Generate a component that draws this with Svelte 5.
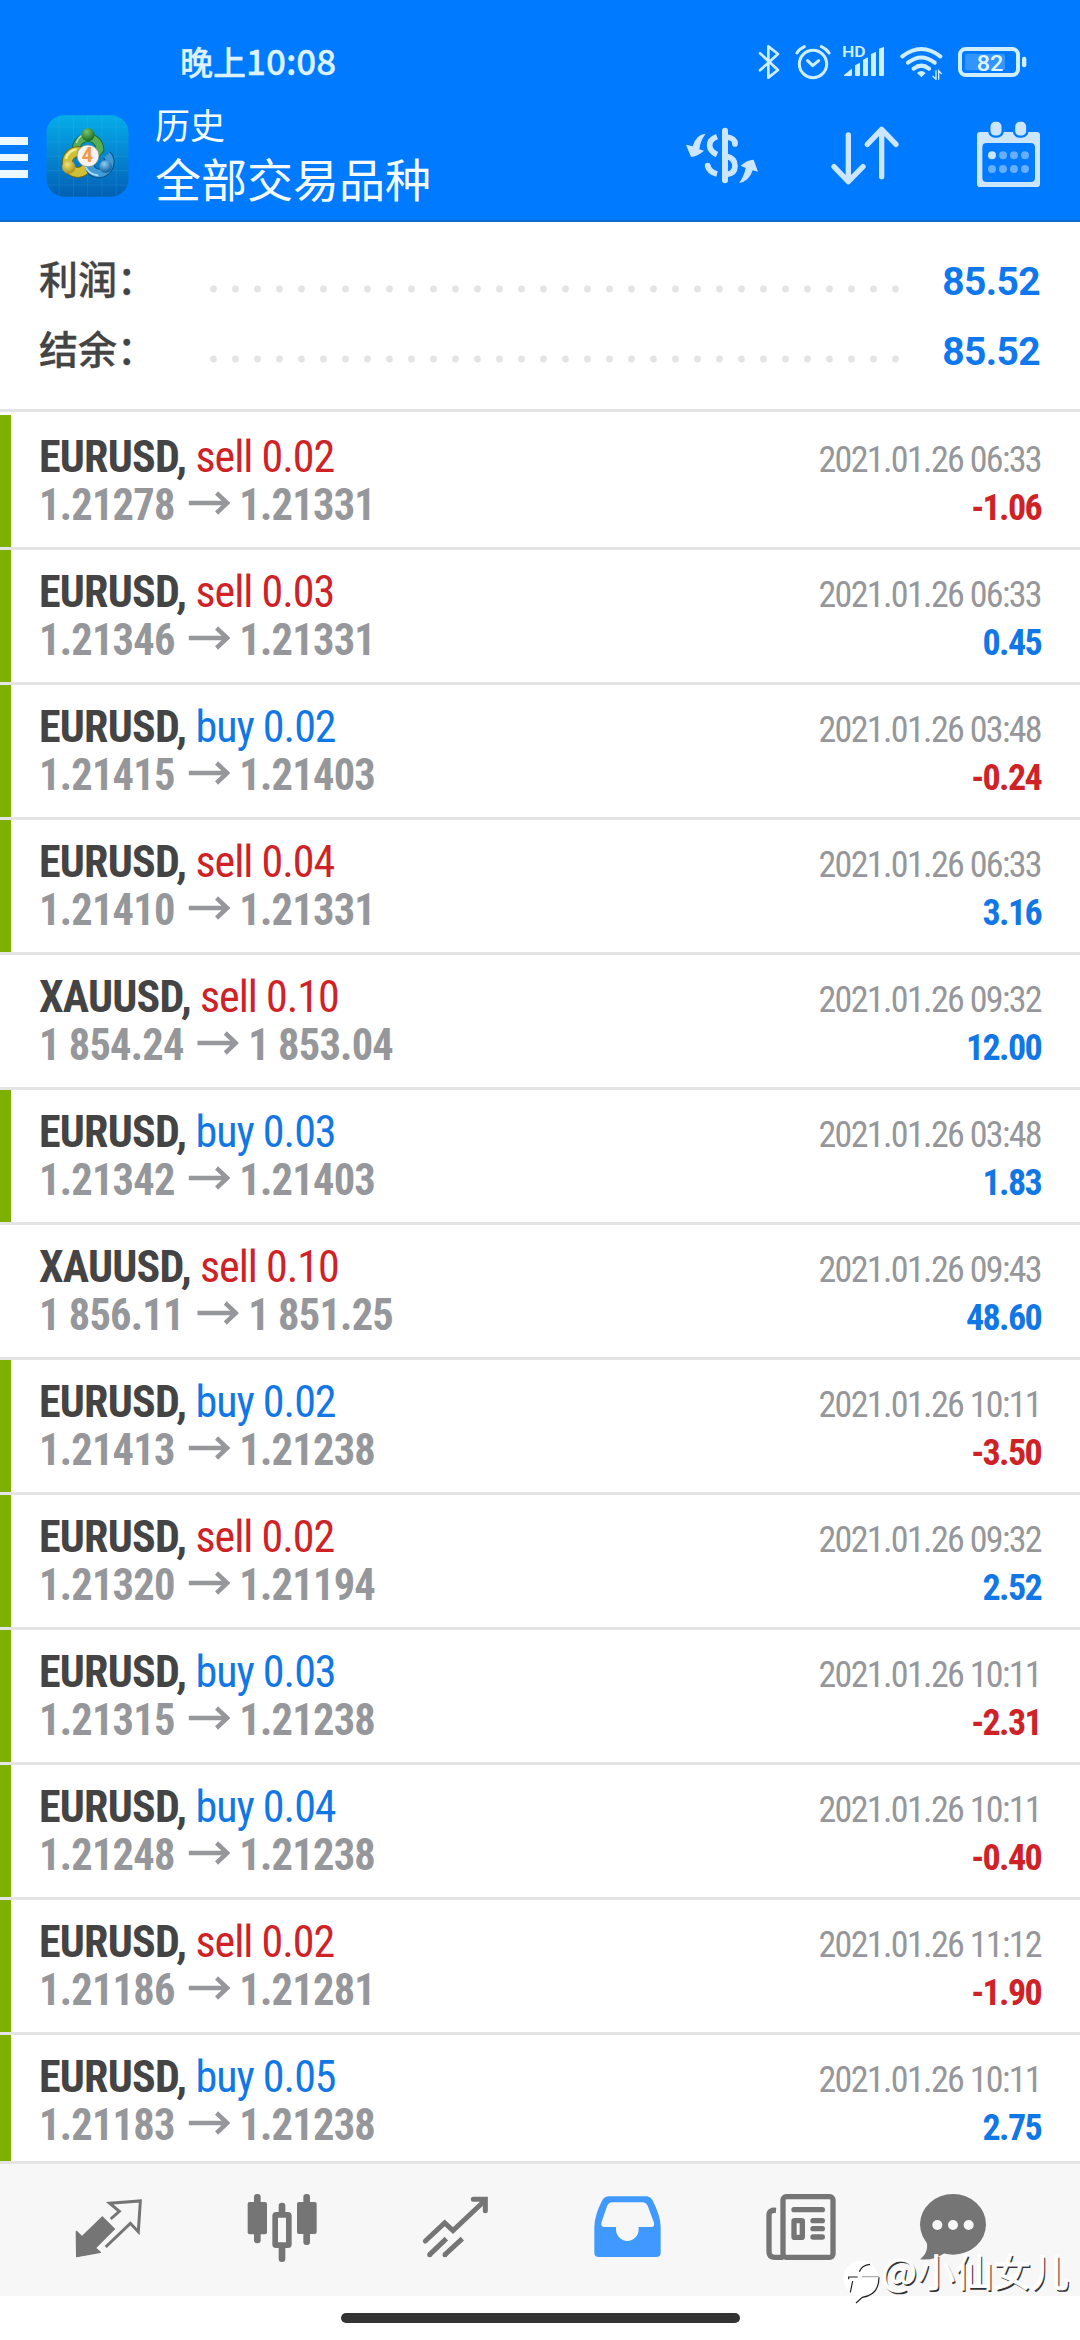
<script>
  const summary = [
    { label: '利润：', value: '85.52' },
    { label: '结余：', value: '85.52' },
  ];

  const deals = [
    { symbol: 'EURUSD', side: 'sell', volume: '0.02', open: '1.21278', close: '1.21331', time: '2021.01.26 06:33', profit: '-1.06', mark: true },
    { symbol: 'EURUSD', side: 'sell', volume: '0.03', open: '1.21346', close: '1.21331', time: '2021.01.26 06:33', profit: '0.45', mark: true },
    { symbol: 'EURUSD', side: 'buy', volume: '0.02', open: '1.21415', close: '1.21403', time: '2021.01.26 03:48', profit: '-0.24', mark: true },
    { symbol: 'EURUSD', side: 'sell', volume: '0.04', open: '1.21410', close: '1.21331', time: '2021.01.26 06:33', profit: '3.16', mark: true },
    { symbol: 'XAUUSD', side: 'sell', volume: '0.10', open: '1 854.24', close: '1 853.04', time: '2021.01.26 09:32', profit: '12.00', mark: false },
    { symbol: 'EURUSD', side: 'buy', volume: '0.03', open: '1.21342', close: '1.21403', time: '2021.01.26 03:48', profit: '1.83', mark: true },
    { symbol: 'XAUUSD', side: 'sell', volume: '0.10', open: '1 856.11', close: '1 851.25', time: '2021.01.26 09:43', profit: '48.60', mark: false },
    { symbol: 'EURUSD', side: 'buy', volume: '0.02', open: '1.21413', close: '1.21238', time: '2021.01.26 10:11', profit: '-3.50', mark: true },
    { symbol: 'EURUSD', side: 'sell', volume: '0.02', open: '1.21320', close: '1.21194', time: '2021.01.26 09:32', profit: '2.52', mark: true },
    { symbol: 'EURUSD', side: 'buy', volume: '0.03', open: '1.21315', close: '1.21238', time: '2021.01.26 10:11', profit: '-2.31', mark: true },
    { symbol: 'EURUSD', side: 'buy', volume: '0.04', open: '1.21248', close: '1.21238', time: '2021.01.26 10:11', profit: '-0.40', mark: true },
    { symbol: 'EURUSD', side: 'sell', volume: '0.02', open: '1.21186', close: '1.21281', time: '2021.01.26 11:12', profit: '-1.90', mark: true },
    { symbol: 'EURUSD', side: 'buy', volume: '0.05', open: '1.21183', close: '1.21238', time: '2021.01.26 10:11', profit: '2.75', mark: true },
  ];

  const dots = Array.from({ length: 32 }, (_, i) => 3.5 + i * 22);
</script>

<div class="screen">
  <header>
    <div class="status">
      <div class="clock">晚上<span>10:08</span></div>
      <div class="status-icons">
        <svg class="bluetooth" viewBox="353 72 66 108">
          <path d="M359 100 413 150 384 173V79L413 102 359 151" fill="none" stroke="#cfeeff" stroke-width="8" stroke-linecap="round" stroke-linejoin="round" />
        </svg>
        <svg class="alarm" viewBox="465 72 108 108" fill="none" stroke="#cfeeff" stroke-width="9" stroke-linecap="round" stroke-linejoin="round">
          <circle cx="519" cy="132" r="41" />
          <path d="M503 122 518 137 536 122M471 99Q478 87 493 80M544 80Q560 87 567 99" />
        </svg>
        <svg class="signal" viewBox="606 72 129 108" fill="#cfeeff">
          <text x="606" y="110" font-size="44" font-weight="600" textLength="71" lengthAdjust="spacingAndGlyphs">HD</text>
          <path d="M612 165 634 147Q636 145 636 148V164Q636 168 632 168H614Q611 168 612 165ZM645 136 660 128V165Q660 168 657 168H648Q645 168 645 165ZM669 119 684 112V165Q684 168 681 168H672Q669 168 669 165ZM693 102 708 95V165Q708 168 705 168H696Q693 168 693 165ZM717 86 732 80V165Q732 168 729 168H720Q717 168 717 165Z" />
        </svg>
        <svg class="wifi" viewBox="777 72 132 108" fill="none" stroke="#cfeeff" stroke-width="12" stroke-linecap="round">
          <path d="M787 109Q844 65 901 109M804 128Q844 97 884 128M821 146Q844 128 867 146" />
          <path d="M831 159Q844 147 857 159L844 172Z" fill="#cfeeff" stroke="none" />
          <path d="M888 152V178L879 169M896 178V152L904 161" stroke-width="4" />
        </svg>
        <svg class="battery" viewBox="951 72 210 108">
          <rect x="960" y="87" width="174" height="78" rx="17" fill="none" stroke="#cfeeff" stroke-width="12" />
          <rect x="975" y="102" width="120" height="49" rx="6" fill="#3395ff" />
          <rect x="1146" y="110" width="13" height="32" rx="6" fill="#cfeeff" />
          <text x="1010" y="152" font-size="66" font-weight="500" textLength="80" lengthAdjust="spacingAndGlyphs" fill="#e2f6ff">82</text>
        </svg>
      </div>
    </div>

    <div class="toolbar">
      <div class="menu"><i></i><i></i><i></i></div>
      <svg class="logo" viewBox="139 74 249 247">
        <defs>
          <linearGradient id="tile" x1="0" y1="0" x2="0" y2="1">
            <stop offset="0" stop-color="#05ade8" />
            <stop offset=".5" stop-color="#0585d0" />
            <stop offset="1" stop-color="#0260b4" />
          </linearGradient>
          <radialGradient id="green" cx=".4" cy=".3" r=".7">
            <stop offset="0" stop-color="#7cc56c" />
            <stop offset="1" stop-color="#156a22" />
          </radialGradient>
          <radialGradient id="yellow" cx=".4" cy=".3" r=".7">
            <stop offset="0" stop-color="#f0e278" />
            <stop offset="1" stop-color="#a8901a" />
          </radialGradient>
          <radialGradient id="blue" cx=".4" cy=".3" r=".7">
            <stop offset="0" stop-color="#8fd0f5" />
            <stop offset="1" stop-color="#0d5d9f" />
          </radialGradient>
        </defs>
        <rect x="140" y="75" width="247" height="245" rx="52" fill="url(#tile)" />
        <path d="M178 80V316M221 76V320M264 76V320M307 76V320M350 80V316M142 110H385M140 155H387M140 198H387M140 241H387M142 285H385" stroke="#6fd0ff" stroke-opacity=".2" stroke-width="2" />
        <g fill="none">
          <path d="M229 178A36 36 0 1 1 301 178L284 200" stroke="#1b6a30" stroke-width="26" />
          <path d="M229 178A36 36 0 1 1 301 178L284 200" stroke="#55ae55" stroke-width="20" />
          <circle cx="234" cy="216" r="31" stroke="#6f6a14" stroke-width="33" />
          <circle cx="234" cy="216" r="31" stroke="#cfc038" stroke-width="27" />
          <path d="M269 224Q274 250 300 250A34 34 0 0 0 322 194" stroke="#0b4f86" stroke-width="29" />
          <path d="M269 224Q274 250 300 250A34 34 0 0 0 322 194" stroke="#3f9ad6" stroke-width="23" />
          <path d="M256 226Q264 252 296 256" stroke="#a7dcfa" stroke-width="6" />
          <path d="M198 206Q206 182 230 177" stroke="#f5ef98" stroke-width="7" />
          <path d="M230 158Q236 139 250 134" stroke="#b8e3ae" stroke-width="5" />
        </g>
        <circle cx="265" cy="133" r="20" fill="url(#green)" />
        <circle cx="207" cy="231" r="20" fill="url(#yellow)" />
        <circle cx="318" cy="229" r="19" fill="url(#blue)" />
        <circle cx="265" cy="197" r="33" fill="#f6f3f2" stroke="#6a7f70" stroke-width="2" />
        <text x="263" y="217" font-size="59" font-weight="700" text-anchor="middle" fill="#f39843">4</text>
      </svg>
      <div class="titles">
        <div class="section">历史</div>
        <div class="filter">全部交易品种</div>
      </div>
      <div class="actions">
        <svg class="currency" viewBox="135 315 222 174">
          <g fill="none" stroke="#cce6ff" stroke-width="17">
            <path d="M255 329V478" stroke-linecap="round" stroke-width="18" />
            <path d="M260 348Q283 350 286 368" />
            <path d="M285 367V369" stroke-linecap="round" />
            <path d="M260 406Q285 412 285 435T260 460M231 347Q209 355 209 373T231 401M203 434Q207 453 231 459" />
            <path d="M203 434V435" stroke-linecap="round" />
          </g>
          <path d="M197 338Q168 340 158 376L138 371 153 408Q172 407 192 389L178 385Q181 358 197 338ZM297 486Q328 481 338 448L354 452 341 416Q321 416 302 434L317 441Q312 467 297 486Z" fill="#cce6ff" />
        </svg>
        <svg class="sort" viewBox="570 315 210 180">
          <path d="M625 345V484M582 440 625 485 669 440M725 470V329M682 373 725 328 768 373" fill="none" stroke="#cce6ff" stroke-width="16" stroke-linecap="round" stroke-linejoin="round" />
        </svg>
        <svg class="calendar" viewBox="1008 303 195 201" fill="#cce6ff">
          <path fill-rule="evenodd" d="M1021 336H1190Q1200 336 1200 346V491Q1200 501 1190 501H1021Q1011 501 1011 491V346Q1011 336 1021 336ZM1040 369Q1027 369 1027 382V473Q1027 486 1040 486H1172Q1185 486 1185 473V382Q1185 369 1172 369Z" />
          <rect x="1048" y="302" width="40" height="48" rx="17" stroke="#007aff" stroke-width="7" />
          <rect x="1122" y="302" width="40" height="48" rx="17" stroke="#007aff" stroke-width="7" />
          {#each [406, 447] as y}
            {#each [1056, 1089, 1122, 1155] as x}
              <circle cx={x} cy={y} r="12" fill={x === 1056 && y === 406 ? '#cce6ff' : '#66afff'} />
            {/each}
          {/each}
        </svg>
      </div>
    </div>
  </header>

  <section class="summary">
    {#each summary as line}
      <div class="total">
        <span class="label">{line.label}</span>
        <svg class="leader" viewBox="0 0 690 8">
          {#each dots as x}
            <circle cx={x} cy="4" r="3.4" />
          {/each}
        </svg>
        <span class="sum">{line.value}</span>
      </div>
    {/each}
  </section>

  <main>
    {#each deals as deal}
      <article class:mark={deal.mark}>
        <div class="left">
          <div class="name"><b>{deal.symbol},</b> <span class={deal.side}>{deal.side} {deal.volume}</span></div>
          <div class="prices">
            <span>{deal.open}</span>
            <svg viewBox="0 0 43 24"><path d="M0 12H40M29 2 40 12 29 22" /></svg>
            <span>{deal.close}</span>
          </div>
        </div>
        <div class="right">
          <div class="time">{deal.time}</div>
          <div class="profit" class:loss={deal.profit.startsWith('-')}>{deal.profit}</div>
        </div>
      </article>
    {/each}
  </main>

  <nav>
    <svg viewBox="222 519 207 210" width="69">
      <path d="M307 591 343 627 286 684 301 697 230 710 229 634 246 650Z" fill="#757575" stroke="#757575" stroke-width="4" stroke-linejoin="round" />
      <path d="M332 597 358 574 329 550 421 543 415 635 391 610 317 681" fill="none" stroke="#757575" stroke-width="9" />
    </svg>
    <svg viewBox="735 519 216 210" width="72" fill="#757575">
      <rect x="740" y="546" width="58" height="97" rx="6" />
      <rect x="759" y="522" width="20" height="148" rx="9" />
      <rect x="888" y="546" width="59" height="96" rx="6" />
      <rect x="907" y="522" width="20" height="153" rx="9" />
      <rect x="833" y="548" width="20" height="40" rx="9" />
      <rect x="833" y="674" width="20" height="52" rx="9" />
      <rect x="822.5" y="584.5" width="41" height="91" rx="3" fill="#f7f7f7" stroke="#757575" stroke-width="17" stroke-linejoin="round" />
    </svg>
    <svg viewBox="60 159 204 210" width="68" fill="none" stroke="#757575" stroke-width="15">
      <path d="M73 303 131 249 156 272 250 183M217 178H253V212" stroke-linecap="round" />
      <path d="M86 344 136 296M132 344 184 296" />
      <path d="M86 344V344.1M132 344V344.1" stroke-linecap="round" />
    </svg>
    <svg viewBox="579 159 207 210" width="69">
      <path fill="#4099ff" fill-rule="evenodd" d="M625 169H742Q752 171 757 180 781 225 782 260V338Q782 351 768 351H597Q583 351 583 338V260Q584 225 606 182 613 170 625 169ZM635 187Q626 188 621 199L604 248Q602 261 614 261H648V268A34 35 0 0 0 716 268V261H753Q765 261 762 248L743 197Q739 188 729 187Z" />
    </svg>
    <svg viewBox="105 159 216 210" width="72" fill="none" stroke="#757575" stroke-width="16">
      <rect x="159" y="170" width="150" height="182" rx="10" />
      <path d="M138 211Q117 209 117 225V335Q117 352 135 352H160" />
      <path d="M192 209H277M249 242H277M249 266H277M249 291H277" stroke-linecap="round" />
      <rect x="192" y="242" width="25" height="50" rx="2" />
    </svg>
    <svg viewBox="567 159 204 210" width="68">
      <ellipse cx="669" cy="253" rx="99" ry="91" fill="#757575" />
      <path d="M588 298Q600 335 570 358 612 363 650 335Z" fill="#757575" />
      <g fill="#f7f7f7">
        <circle cx="622" cy="255" r="15" />
        <circle cx="669" cy="255" r="15" />
        <circle cx="716" cy="255" r="15" />
      </g>
    </svg>
  </nav>
  <div class="gesture"><i></i></div>

  <div class="watermark">
    <svg viewBox="338 360 114 132">
      <circle cx="392" cy="414" r="53" fill="#fff" />
      <path d="M387 395Q395 375 419 373M355 418V411H382M360 457 367 423M446 412Q446 465 396 472L377 489" fill="none" stroke="#222" stroke-width="3.5" />
      <path d="M395 410H446" stroke="#aaa" stroke-width="3.5" />
    </svg>
    <span>@小仙女儿</span>
  </div>
</div>

<style>
:global(body) {
  background: #fff;
}

.screen {
  position: relative;
  display: flex;
  flex-direction: column;
  width: 1080px;
  height: 2340px;
  overflow: hidden;
  background: #fff;
  font-family: Roboto, "Noto Sans CJK SC", sans-serif;
}

svg {
  display: block;
  flex: none;
}

header {
  box-sizing: border-box;
  height: 222px;
  background: #007aff;
  border-bottom: 2px solid #0f6bd0;
}

.status {
  display: flex;
  justify-content: space-between;
  align-items: center;
  box-sizing: border-box;
  height: 96px;
  padding: 28px 53px 0 180px;
}

.clock {
  display: flex;
  align-items: baseline;
  padding-bottom: 4px;
  color: #dcf3ff;
  font: 500 33px/40px "Noto Sans CJK SC", sans-serif;
  -webkit-text-stroke: 0.3px #dcf3ff;
}

.clock span {
  font-size: 35px;
}

.status-icons {
  display: flex;
}

.status-icons svg {
  height: 36px;
}

.bluetooth { width: 22px; margin-right: 15px; }
.alarm { width: 36px; margin-right: 11px; }
.signal { width: 43px; margin-right: 14px; }
.wifi { width: 44px; margin-right: 14px; }
.battery { width: 70px; }

.toolbar {
  display: flex;
  align-items: center;
  height: 117px;
}

.menu {
  display: flex;
  flex-direction: column;
  gap: 9px;
  width: 28px;
  padding-top: 6px;
}

.menu i {
  height: 7.5px;
  background: #ecf8ff;
}

.logo {
  width: 83px;
  height: 82px;
  margin: 3px 26px 0 18px;
}

.titles {
  flex: 1;
  padding-bottom: 6px;
  color: #f4fbff;
  font-family: "Noto Sans CJK SC", sans-serif;
}

.section {
  font-size: 35px;
  line-height: 46px;
}

.filter {
  font-size: 46px;
  line-height: 50px;
  margin-top: 5px;
}

.actions {
  display: flex;
  align-items: center;
  padding-right: 39px;
}

.currency { width: 74px; height: 58px; margin-right: 71px; }
.sort { width: 70px; height: 60px; margin-right: 76px; }
.calendar { width: 65px; height: 67px; }

.summary {
  box-sizing: border-box;
  height: 190px;
  padding: 24px 39px 0;
  border-bottom: 3px solid #e4e4e4;
}

.total {
  display: flex;
  align-items: center;
  height: 70px;
}

.label {
  width: 171px;
  padding-bottom: 7px;
  color: #444;
  font: 500 39px/63px "Noto Sans CJK SC", sans-serif;
  -webkit-text-stroke: 0.3px #444;
}

.leader {
  width: 690px;
  height: 8px;
  margin-top: 15px;
  fill: #e4e4e4;
}

.sum {
  flex: 1;
  padding: 1px 1px 0 0;
  color: #0f78ee;
  font-size: 39px;
  font-weight: 700;
  letter-spacing: -0.6px;
  text-align: right;
}

main {
  height: 1749px;
  overflow: hidden;
}

article {
  display: flex;
  justify-content: space-between;
  box-sizing: border-box;
  height: 135px;
  padding: 18px 39px 0 39px;
  border-top: 3px solid #e4e4e4;
  font-family: "Roboto Condensed", Roboto, sans-serif;
  font-stretch: 75%;
}

article:first-child {
  border-top-color: #fff;
}

.mark {
  background: linear-gradient(90deg, #7eb000 11px, transparent 11px) padding-box;
}

.name {
  color: #444;
  font-size: 44px;
  letter-spacing: -1px;
  line-height: 48px;
  white-space: pre;
}

.name b {
  letter-spacing: -0.8px;
}

.sell, .loss { color: #cf2227; }
.buy { color: #1277e6; }

.prices {
  display: flex;
  align-items: center;
  color: #96979b;
  font-size: 44px;
  font-weight: 700;
  letter-spacing: -0.8px;
  line-height: 48px;
  transform: scaleX(0.965);
  transform-origin: left;
}

.prices svg {
  width: 43px;
  height: 24px;
  margin: 0 10px 5px 14px;
  fill: none;
  stroke: #96979b;
  stroke-width: 4.5;
}

.right {
  padding-top: 3px;
  text-align: right;
  font-size: 36px;
  letter-spacing: -1.65px;
  line-height: 48px;
}

.time {
  color: #96979b;
}

.profit {
  color: #1277e6;
  font-weight: 700;
}

.profit.loss { color: #cf2227; }

nav {
  display: grid;
  grid-template-columns: repeat(5, 173px) 131px;
  place-items: center;
  box-sizing: border-box;
  height: 135px;
  padding: 0 0 4px 22px;
  background: #f7f7f7;
  border-top: 3px solid #e4e4e4;
}

nav svg {
  height: 70px;
}

.gesture {
  display: flex;
  justify-content: center;
  padding-top: 17px;
}

.gesture i {
  width: 399px;
  height: 10px;
  border-radius: 5px;
  background: #333;
}

.watermark {
  position: absolute;
  left: 843px;
  top: 2260px;
  display: flex;
  color: #fff;
  font: 38px/38px "Noto Sans CJK SC", sans-serif;
  -webkit-text-stroke: 0.8px #fff;
  text-shadow: 1.5px 1.5px 0 #333;
}

.watermark span {
  margin-top: -9px;
}

.watermark svg {
  width: 38px;
  height: 44px;
}
</style>
